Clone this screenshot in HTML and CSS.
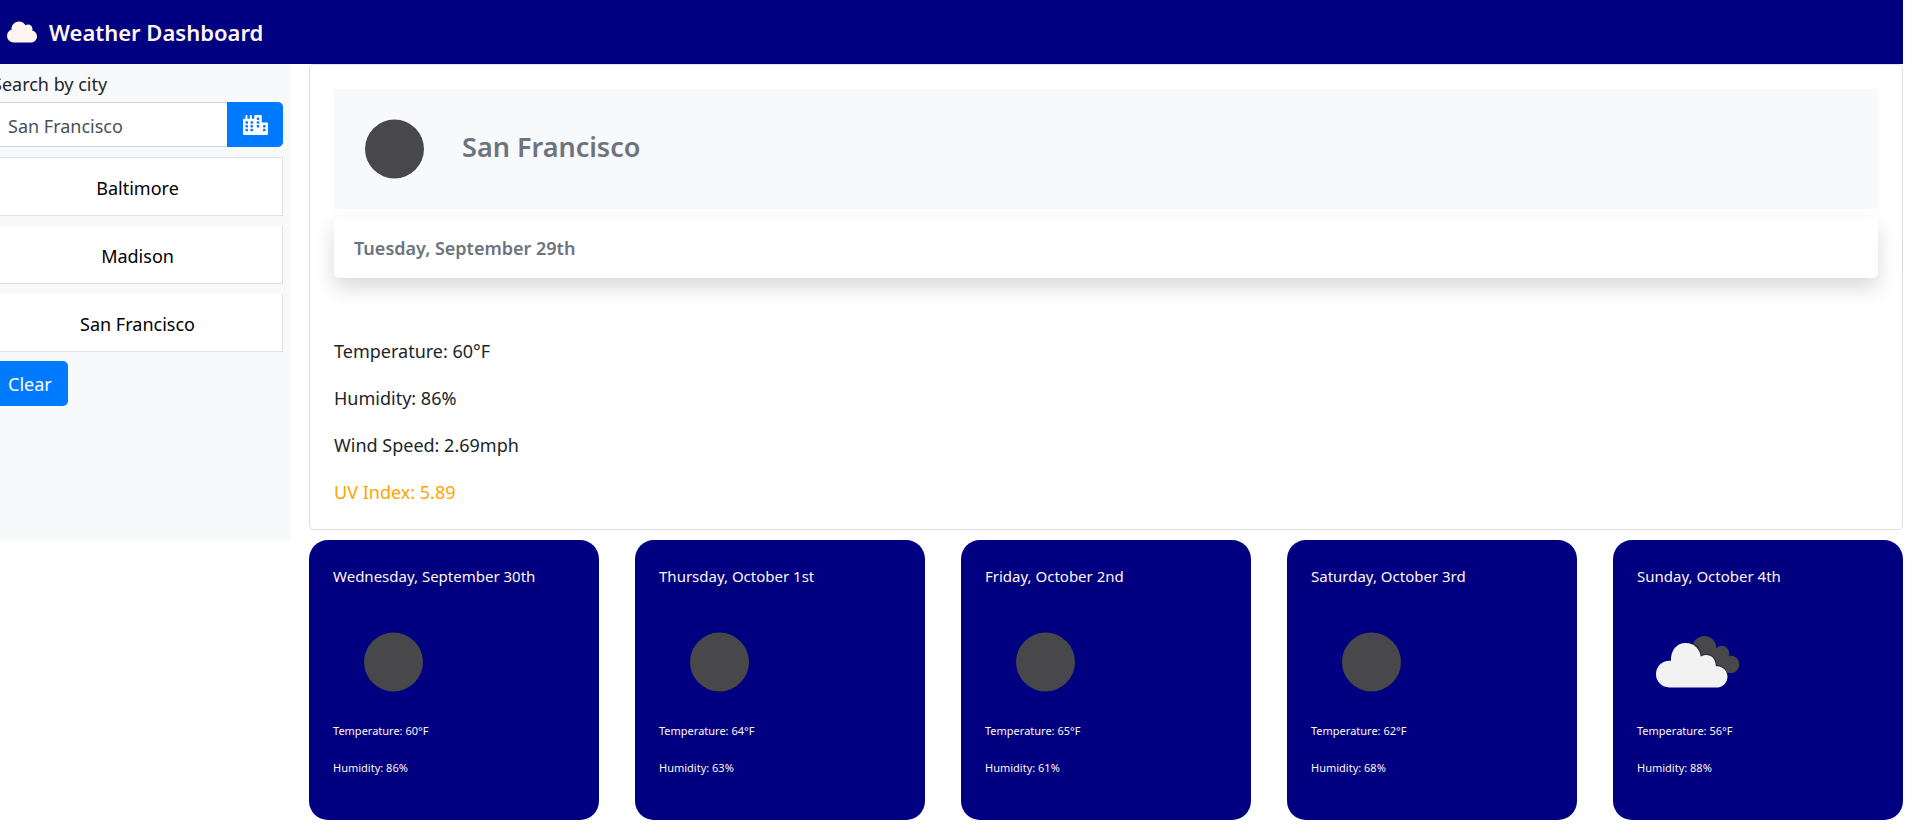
FILE: index.html
```html
<!DOCTYPE html>
<html lang="en">
<head>
<meta charset="utf-8">
<meta name="viewport" content="width=device-width, initial-scale=1">
<title>Weather Dashboard</title>
<link rel="stylesheet" href="styles.css">
</head>
<body>
<svg class="sprite" aria-hidden="true">
  <symbol id="clear-night" viewBox="0 0 120 120">
    <circle cx="60.5" cy="60" r="29.5" fill="#48484a"/>
  </symbol>
  <symbol id="broken-clouds" viewBox="0 0 120 120">
    <g fill="#48484a">
      <circle cx="67.3" cy="45.9" r="12"/>
      <circle cx="84.7" cy="51.4" r="7.6"/>
      <circle cx="93.4" cy="62.4" r="8.9"/>
      <path d="M62 50 78 48 94 60 94 71.3 80 66Z"/>
    </g>
    <path fill="none" stroke="#2a2a30" stroke-width="2" d="M57 42.500C61 45.500 63.500 49.500 63.700 54.500C70 50.500 79 54 78.800 64.200C83 64 86.500 65.500 88.500 68.500"/>
    <path fill="#f2f2f2" d="M32.400 85.400A13.200 13.200 0 0 1 19 72C19 64.500 25 58.800 32.400 58.800H34C33.500 48.500 39.500 41 48.700 41C57 41 63 47 63.700 54.500C70 50.500 79 54 78.800 64.200C86 63.500 90.500 69 90.500 74.800C90.500 80.500 86 85.400 80.300 85.400Z"/>
  </symbol>
</svg>

<header class="navbar">
  <svg class="navbar-icon" viewBox="0 0 640 512" aria-hidden="true"><path fill="currentColor" d="M537.6 226.6c4.100-10.700 6.400-22.400 6.400-34.600 0-53-43-96-96-96-19.700 0-38.100 6-53.300 16.200C367 64.200 315.300 32 256 32c-88.400 0-160 71.600-160 160 0 2.700.1 5.400.2 8.100C40.200 219.800 0 273.200 0 336c0 79.500 64.500 144 144 144h368c70.700 0 128-57.300 128-128 0-61.900-44-113.600-102.400-125.400z"/></svg>
  <h1 class="navbar-title">Weather Dashboard</h1>
</header>

<div class="layout">
  <aside class="sidebar">
    <form class="search">
      <label class="search-label" for="city">Search by city</label>
      <div class="search-group">
        <input class="search-input" id="city" type="text" value="San Francisco">
        <button class="search-button" type="button" aria-label="Search">
          <svg class="search-icon" viewBox="0 0 640 512" aria-hidden="true">
            <path fill="currentColor" d="M616 192H480V24c0-13.260-10.740-24-24-24H312c-13.260 0-24 10.740-24 24v72h-64V16c0-8.840-7.160-16-16-16h-16c-8.840 0-16 7.160-16 16v80h-64V16c0-8.840-7.160-16-16-16H80c-8.840 0-16 7.160-16 16v80H24c-13.260 0-24 10.740-24 24v360c0 17.670 14.330 32 32 32h576c17.670 0 32-14.330 32-32V216c0-13.260-10.750-24-24-24z"/>
            <g fill="#007bff">
              <rect x="64" y="160" width="64" height="64" rx="12"/><rect x="64" y="256" width="64" height="64" rx="12"/><rect x="64" y="352" width="64" height="64" rx="12"/>
              <rect x="192" y="160" width="64" height="64" rx="12"/><rect x="192" y="256" width="64" height="64" rx="12"/><rect x="192" y="352" width="64" height="64" rx="12"/>
              <rect x="352" y="64" width="64" height="64" rx="12"/><rect x="352" y="160" width="64" height="64" rx="12"/><rect x="352" y="256" width="64" height="64" rx="12"/>
              <rect x="512" y="256" width="64" height="64" rx="12"/><rect x="512" y="352" width="64" height="64" rx="12"/>
            </g>
          </svg>
        </button>
      </div>
    </form>
    <div class="history">
      <button class="history-item" type="button">Baltimore</button>
      <button class="history-item" type="button">Madison</button>
      <button class="history-item" type="button">San Francisco</button>
    </div>
    <button class="clear-button" type="button">Clear</button>
  </aside>

  <main class="today">
    <div class="today-header">
      <svg class="weather-icon" role="img" aria-label="Clear night"><use href="#clear-night"/></svg>
      <h2 class="today-city">San Francisco</h2>
    </div>
    <h3 class="today-date">Tuesday, September 29th</h3>
    <div class="today-stats">
      <p>Temperature: 60°F</p>
      <p>Humidity: 86%</p>
      <p>Wind Speed: 2.69mph</p>
      <p class="uv-moderate">UV Index: 5.89</p>
    </div>
  </main>

  <section class="forecast" aria-label="Five day forecast">
    <article class="day">
      <h4 class="day-date">Wednesday, September 30th</h4>
      <svg class="weather-icon" role="img" aria-label="Clear night"><use href="#clear-night"/></svg>
      <p>Temperature: 60°F</p>
      <p>Humidity: 86%</p>
    </article>
    <article class="day">
      <h4 class="day-date">Thursday, October 1st</h4>
      <svg class="weather-icon" role="img" aria-label="Clear night"><use href="#clear-night"/></svg>
      <p>Temperature: 64°F</p>
      <p>Humidity: 63%</p>
    </article>
    <article class="day">
      <h4 class="day-date">Friday, October 2nd</h4>
      <svg class="weather-icon" role="img" aria-label="Clear night"><use href="#clear-night"/></svg>
      <p>Temperature: 65°F</p>
      <p>Humidity: 61%</p>
    </article>
    <article class="day">
      <h4 class="day-date">Saturday, October 3rd</h4>
      <svg class="weather-icon" role="img" aria-label="Clear night"><use href="#clear-night"/></svg>
      <p>Temperature: 62°F</p>
      <p>Humidity: 68%</p>
    </article>
    <article class="day">
      <h4 class="day-date">Sunday, October 4th</h4>
      <svg class="weather-icon" role="img" aria-label="Broken clouds"><use href="#broken-clouds"/></svg>
      <p>Temperature: 56°F</p>
      <p>Humidity: 88%</p>
    </article>
  </section>
</div>
</body>
</html>
```
FILE: styles.css
```css
*, *::before, *::after { box-sizing: border-box; }

body {
  margin: 0;
  padding-right: 15px;
  background: #fff;
  color: #212529;
  font-family: "Segoe UI", "Noto Sans", "Open Sans", sans-serif;
  font-size: 18px;
  line-height: 28px;
}

h1, h2, h3, h4, p { margin: 0; }
button, input { font: inherit; }
svg { display: block; flex: none; }

.sprite { display: none; }

.navbar {
  display: flex;
  align-items: center;
  gap: 12px;
  height: 64px;
  padding-left: 7px;
  background: #000080;
  color: #fff5ee;
}
.navbar-icon { width: 30px; height: 24px; }
.navbar-title { font-size: 22px; font-weight: 600; line-height: 32px; }

.layout {
  display: grid;
  grid-template-columns: 16% minmax(0, 1fr);
  column-gap: 18px;
  margin-left: -16px;
}

.sidebar {
  padding: 6px 8px;
  background: #f8f9fa;
}
.search-label { display: block; margin-bottom: 4px; }
.search-group { display: flex; }
.search-input {
  flex: 1;
  min-width: 0;
  height: 45px;
  padding: 2px 15px 0;
  border: 1px solid #ced4da;
  border-right: 0;
  border-radius: 5px 0 0 5px;
  background: #fff;
  color: #495057;
}
.search-button {
  display: flex;
  align-items: center;
  justify-content: center;
  width: 56px;
  padding: 0;
  border: 0;
  border-radius: 0 5px 5px 0;
  background: #007bff;
  color: #fff;
}
.search-icon { width: 25px; height: 20px; }

.history {
  display: flex;
  flex-direction: column;
  gap: 10px;
  margin: 10px 0 9px;
}
.history-item {
  height: 59px;
  padding: 2px 0 0;
  border: 1px solid #dfdfdf;
  background: #fff;
  color: #000;
}
.history-item + .history-item { height: 58px; border-top: 0; }

.clear-button {
  height: 45px;
  padding: 0 16px;
  border: 0;
  border-radius: 5px;
  background: #007bff;
  color: #fff;
}

.today {
  margin-bottom: 10px;
  padding: 24px 24px 22px;
  border: 1px solid #dfdfdf;
  border-radius: 5px;
}
.today-header {
  display: flex;
  align-items: center;
  gap: 8px;
  background: #f8f9fa;
}
.weather-icon { width: 120px; height: 120px; }
.today-city {
  padding-bottom: 4px;
  color: #6c757d;
  font-size: 27px;
  font-weight: 600;
  line-height: 36px;
}
.today-date {
  margin-top: 8px;
  padding: 17px 20px 15px;
  border-radius: 5px;
  background: #fff;
  box-shadow: 0 10px 20px rgba(0, 0, 0, 0.15);
  color: #6c757d;
  font-size: 18px;
  font-weight: 600;
  line-height: 29px;
}
.today-stats {
  display: grid;
  gap: 17px;
  margin-top: 58px;
  line-height: 30px;
}
.uv-moderate { color: #ffa500; }

.forecast {
  grid-column: 2;
  display: grid;
  grid-template-columns: repeat(5, minmax(0, 1fr));
  gap: 36px;
}
.day {
  padding: 24px 24px 43px;
  border-radius: 19px;
  background: #000080;
  color: #fff5ee;
  font-size: 11px;
  line-height: 18px;
}
.day-date {
  margin-bottom: 14px;
  font-size: 15px;
  font-weight: 400;
  line-height: 24px;
}
.day p { margin-top: 19px; }
.day .weather-icon + p { margin-top: 0; }
```
